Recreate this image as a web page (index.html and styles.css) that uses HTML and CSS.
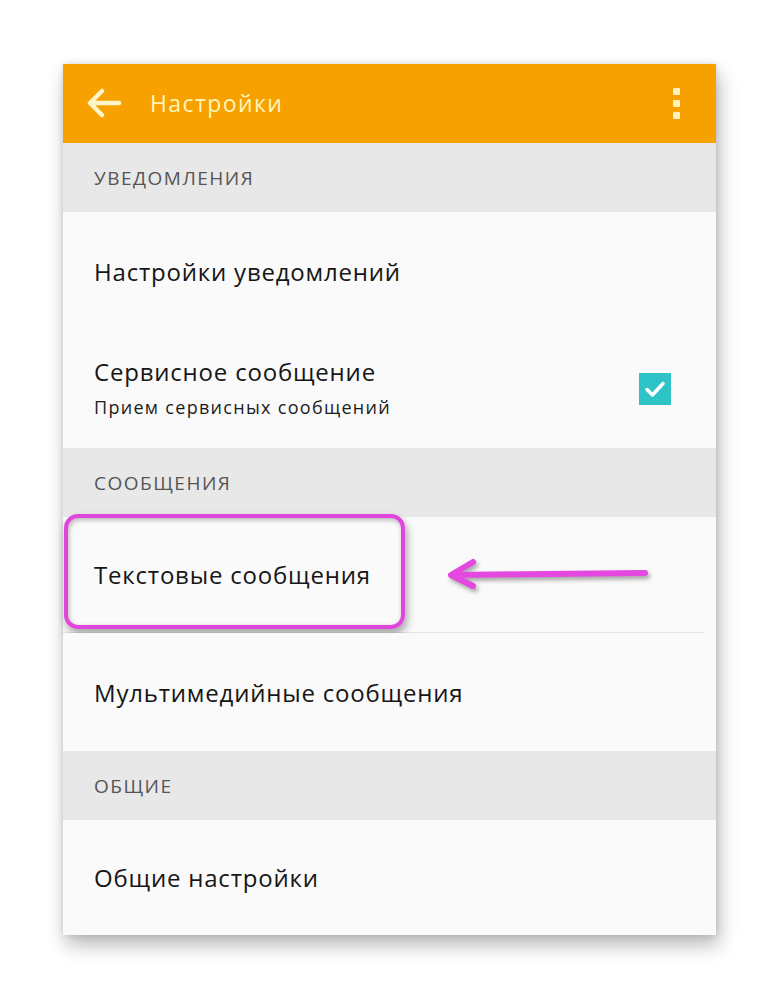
FILE: index.html
```html
<!DOCTYPE html>
<html lang="ru">
<head>
<meta charset="utf-8">
<link rel="stylesheet" href="styles.css">
</head>
<body>
<div class="page">
  <div class="card">
    <div class="appbar">
      <svg class="back" width="38" height="30" viewBox="0 0 38 30">
        <path d="M34 15 H6 M17 3 L5 15 L17 27" fill="none" stroke="#fff6c8" stroke-width="4.5" stroke-linecap="round" stroke-linejoin="round"/>
      </svg>
      <span class="title">Настройки</span>
      <span class="menu"><i></i><i></i><i></i></span>
    </div>
    <div class="section">УВЕДОМЛЕНИЯ</div>
    <div class="row"><span class="label">Настройки уведомлений</span></div>
    <div class="row two">
      <div class="texts">
        <span class="label">Сервисное сообщение</span>
        <span class="sub">Прием сервисных сообщений</span>
      </div>
      <span class="check">
        <svg width="32" height="32" viewBox="0 0 32 32"><path d="M8 16.5 L13.5 22 L24 10.5" fill="none" stroke="#fff" stroke-width="3.5" stroke-linecap="round" stroke-linejoin="round"/></svg>
      </span>
    </div>
    <div class="section">СООБЩЕНИЯ</div>
    <div class="row divided">
      <span class="label">Текстовые сообщения</span>
      <span class="highlight"></span>
      <svg class="pointer" width="214" height="34" viewBox="0 0 214 34">
        <path d="M202 16 L12 18 M30 5 L8 18 L30 29" fill="none" stroke="#e548e0" stroke-width="6" stroke-linecap="round" stroke-linejoin="round"/>
      </svg>
    </div>
    <div class="row"><span class="label">Мультимедийные сообщения</span></div>
    <div class="section">ОБЩИЕ</div>
    <div class="row last"><span class="label">Общие настройки</span></div>
  </div>
</div>
</body>
</html>
```

FILE: styles.css
```css
html, body {
  margin: 0;
  padding: 0;
  background: #ffffff;
}
.page {
  width: 780px;
  height: 998px;
  padding: 64px 0 0 63px;
  box-sizing: border-box;
}
.card {
  width: 653px;
  background: #fafafa;
  box-shadow: 3px 10px 18px rgba(0,0,0,0.28), 0 0 6px rgba(0,0,0,0.12);
  font-family: "Open Sans", "Noto Sans", sans-serif;
}
.appbar {
  height: 79px;
  background: #f6a100;
  display: flex;
  align-items: center;
  padding: 0 0 0 22px;
  box-sizing: border-box;
}
.back {
  margin-top: -2px;
}
.title {
  margin-left: 27px;
  color: #fff4b8;
  font-size: 23px;
  letter-spacing: 1.4px;
  margin-top: -2px;
}
.menu {
  margin-left: auto;
  margin-right: 36px;
  display: flex;
  flex-direction: column;
  gap: 5px;
}
.menu i {
  display: block;
  width: 7px;
  height: 7px;
  background: #fff2c0;
  border-radius: 1px;
}
.section {
  height: 69px;
  background: #e8e8e8;
  color: #555;
  font-size: 19px;
  letter-spacing: 1.5px;
  display: flex;
  align-items: center;
  padding-left: 31px;
}
.row {
  height: 118px;
  display: flex;
  align-items: center;
  padding-left: 31px;
  padding-right: 45px;
  position: relative;
  background: #fafafa;
}
.row.divided {
  height: 115px;
  border-bottom: 1px solid #e4e4e4;
  margin-right: 12px;
}
.row.last {
  height: 115px;
}
.label {
  font-size: 24px;
  letter-spacing: 0.8px;
  color: #161616;
}
.texts {
  display: flex;
  flex-direction: column;
  gap: 7px;
  margin-top: -4px;
}
.sub {
  font-size: 18px;
  letter-spacing: 1.3px;
  color: #1c1c1c;
}
.check {
  margin-left: auto;
  width: 32px;
  height: 32px;
  background: #2ec3c6;
  display: flex;
}
.highlight {
  position: absolute;
  left: 1px;
  top: -3px;
  width: 333px;
  height: 107px;
  border: 4px solid #e046dc;
  border-radius: 14px;
  box-shadow: 2px 5px 8px rgba(0,0,0,0.35), inset 1px 2px 5px rgba(0,0,0,0.28);
}
.pointer {
  position: absolute;
  left: 380px;
  top: 40px;
  filter: drop-shadow(2px 3px 2px rgba(0,0,0,0.35));
}
```
